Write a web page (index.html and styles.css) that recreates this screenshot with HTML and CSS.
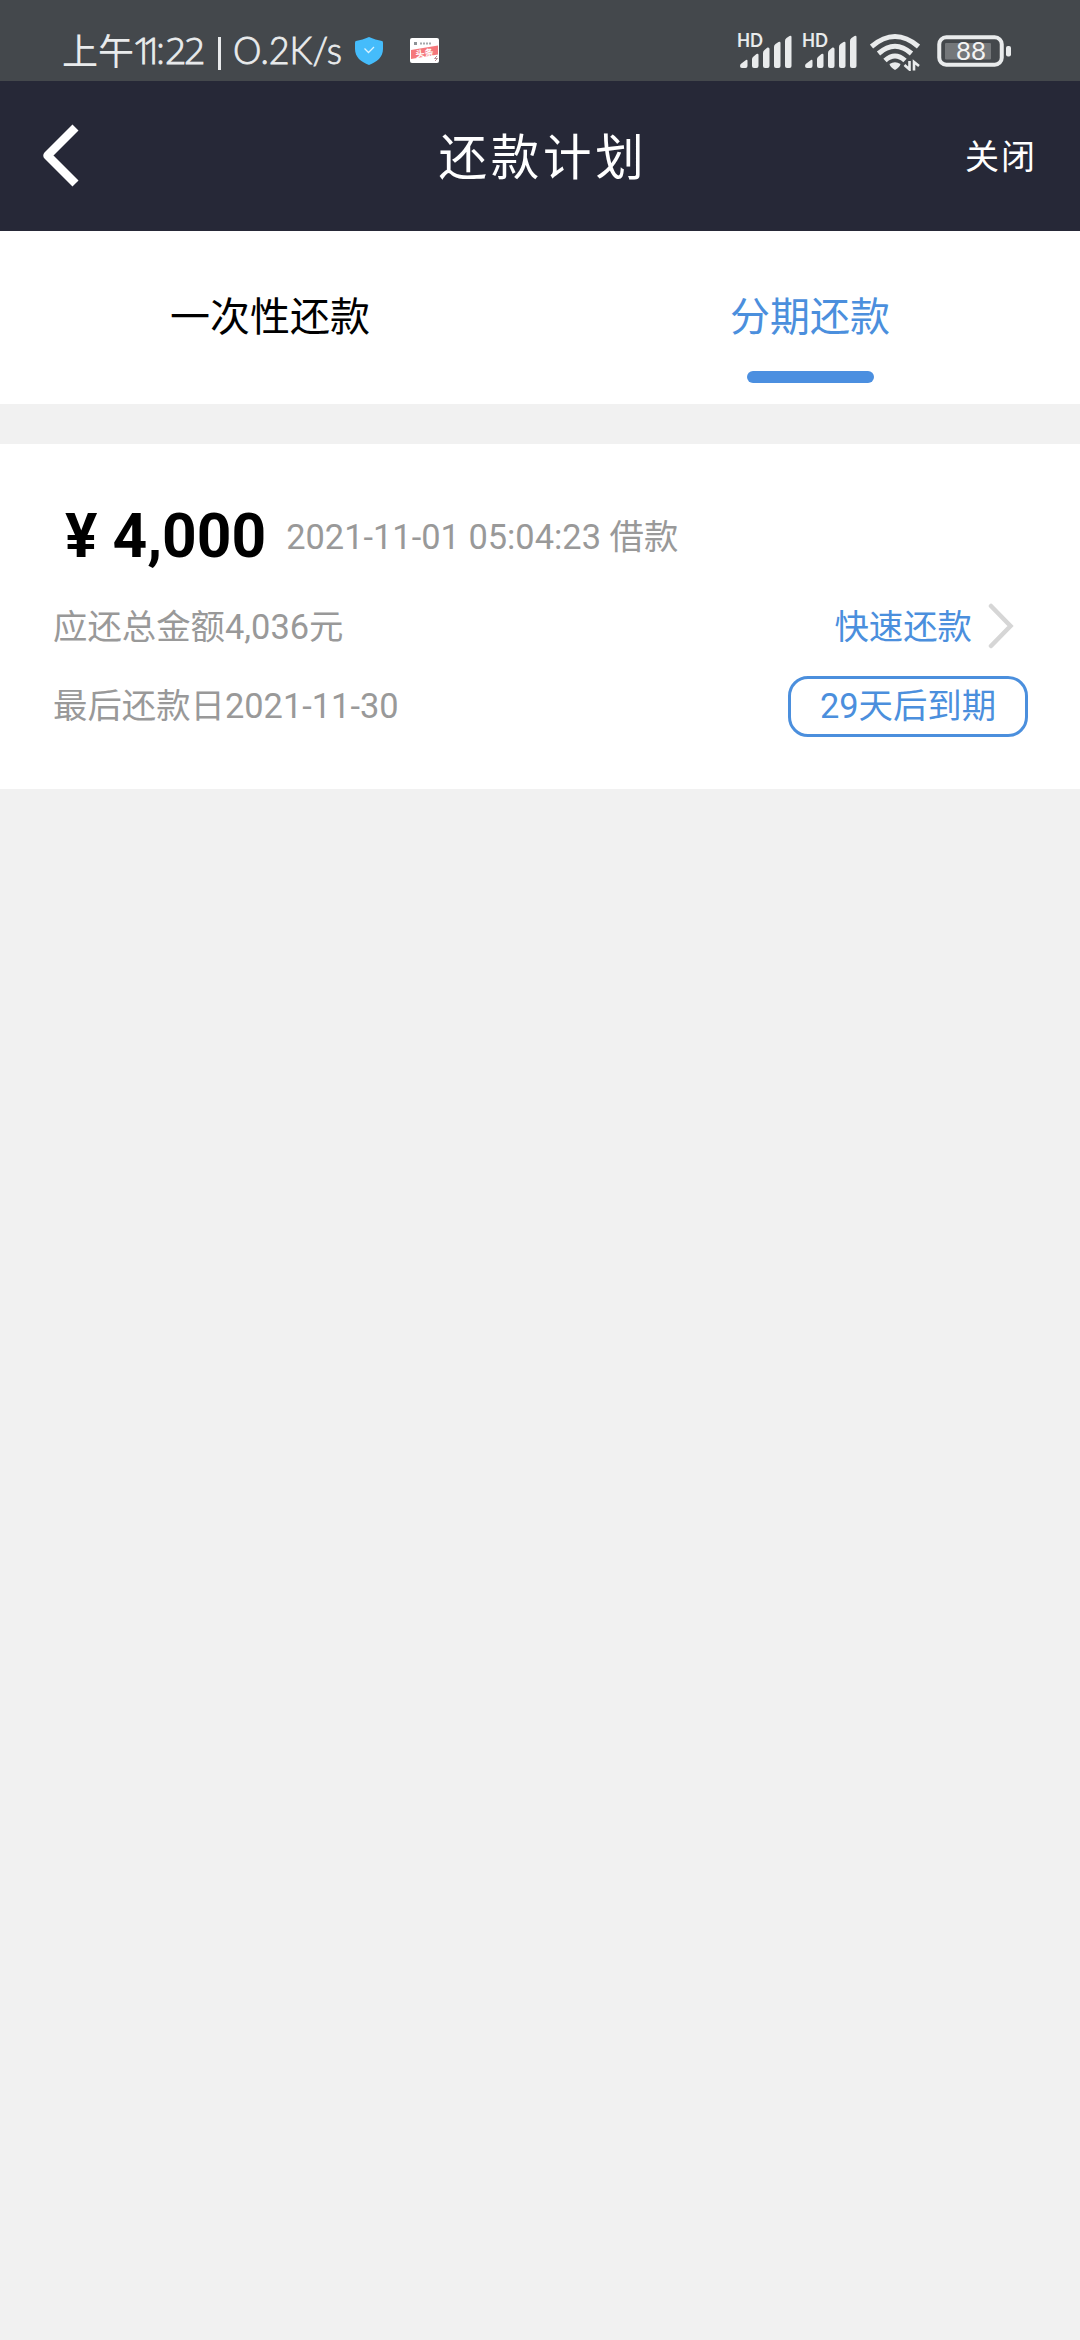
FILE: index.html
```html
<!DOCTYPE html>
<html lang="zh-CN">
<head>
<meta charset="utf-8">
<title>还款计划</title>
<link rel="stylesheet" href="styles.css">
</head>
<body>
<div class="status">
  <div class="status-left">
    <svg class="clock" width="283" height="60" viewBox="0 0 283 60"><text class="cjk" x="0" y="44" textLength="72">上午</text><text class="digits" x="70 80 94 103 122" y="43">11:22</text><path d="M157.500 16V49" stroke="#e9ebec" stroke-width="3"/><text class="latin" x="171" y="43" textLength="109" lengthAdjust="spacingAndGlyphs">O.2K/s</text></svg>
    <svg class="shield" width="28" height="28" viewBox="0 0 28 28"><path d="M14 0C10 2 5 3 1 4Q0 4 0 6V12C0 20 6 25 14 28C22 25 28 20 28 12V6Q28 4 27 4C23 3 18 2 14 0Z" fill="#45bcfb"/><path d="M9.500 11.500L13.500 15.500L19 10" fill="none" stroke="#d8f3ff" stroke-width="1.300"/></svg>
    <svg class="news" width="29" height="25" viewBox="0 0 29 25"><rect width="29" height="25" rx="2" fill="#fff"/><rect x="4" y="4" width="3" height="3" fill="#8d9296"/><path d="M10 5.500H22" stroke="#a5a9ac" stroke-width="2" stroke-dasharray="2 1"/><path d="M1 12L28 7.500V16.500L1 21Z" fill="#f5777b"/><text class="news-text" x="5.500" y="18.500" transform="rotate(-8 14 15)">头条</text><path d="M27 18L24.500 20.500H27.500L25 23" fill="none" stroke="#b98d92" stroke-width="1"/></svg>
  </div>
  <div class="status-right">
    <svg class="signal" width="55" height="43" viewBox="0 -7 55 43"><text class="hd" x="0" y="13.500" textLength="26" lengthAdjust="spacingAndGlyphs">HD</text><g fill="#e9ebec"><path d="M3 33Q3 31 5 30L9 27Q10.500 26 10.500 28V33Q10.500 35 8.500 35H5Q3 35 3 33Z"/><path d="M15 26Q15 24.500 16.500 23.500L19.500 21Q21.500 20 21.500 22V33Q21.500 35 19.500 35H17Q15 35 15 33Z"/><path d="M26 20Q26 18 27.500 17L30.500 14.500Q32.500 14 32.500 16V33Q32.500 35 30.500 35H28Q26 35 26 33Z"/><path d="M37 14Q37 12 38.500 11L41.500 9Q43.500 8 43.500 10V33Q43.500 35 41.500 35H39Q37 35 37 33Z"/><path d="M48 8Q48 6 49.500 5L52.500 3Q54.500 2 54.500 4V33Q54.500 35 52.500 35H50Q48 35 48 33Z"/></g></svg>
    <svg class="signal second" width="55" height="43" viewBox="0 -7 55 43"><text class="hd" x="0" y="13.500" textLength="26" lengthAdjust="spacingAndGlyphs">HD</text><g fill="#e9ebec"><path d="M3 33Q3 31 5 30L9 27Q10.500 26 10.500 28V33Q10.500 35 8.500 35H5Q3 35 3 33Z"/><path d="M15 26Q15 24.500 16.500 23.500L19.500 21Q21.500 20 21.500 22V33Q21.500 35 19.500 35H17Q15 35 15 33Z"/><path d="M26 20Q26 18 27.500 17L30.500 14.500Q32.500 14 32.500 16V33Q32.500 35 30.500 35H28Q26 35 26 33Z"/><path d="M37 14Q37 12 38.500 11L41.500 9Q43.500 8 43.500 10V33Q43.500 35 41.500 35H39Q37 35 37 33Z"/><path d="M48 8Q48 6 49.500 5L52.500 3Q54.500 2 54.500 4V33Q54.500 35 52.500 35H50Q48 35 48 33Z"/></g></svg>
    <svg class="wifi" width="50" height="38" viewBox="0 0 50 38"><g fill="none" stroke="#e9ebec" stroke-width="5"><path d="M1.500 13.500Q25 -6.500 48.500 13.500"/><path d="M8.500 20.500Q25 6 41.500 20.500"/><path d="M15 27.500Q25 18.500 35 27.500"/></g><path d="M19.500 31Q25 27.500 30.500 31Q30 34 25 37Q20 34 19.500 31Z" fill="#e9ebec"/><path d="M39.500 28V36.500L34.500 32M44 37.500V29L49 33" fill="none" stroke="#e9ebec" stroke-width="2.600"/></svg>
    <svg class="battery" width="74" height="33" viewBox="0 0 74 33"><rect x="2.250" y="2.250" width="62.500" height="27.500" rx="7" fill="none" stroke="#e9ebec" stroke-width="4"/><rect x="8" y="8" width="46" height="16.500" rx="1" fill="#74777a"/><rect x="69" y="11" width="5" height="10.500" rx="2" fill="#e9ebec"/><text class="level" x="19" y="25" textLength="30" lengthAdjust="spacingAndGlyphs">88</text></svg>
  </div>
</div>
<header class="header">
  <svg class="back" width="38" height="64" viewBox="0 0 38 64"><path d="M33.500 3.500L5.500 31.500L33.500 59.500" fill="none" stroke="#fff" stroke-width="8.500" stroke-linejoin="round"/></svg>
  <h1 class="title">还款计划</h1>
  <span class="close">关闭</span>
</header>
<nav class="tabs">
  <div class="tab">一次性还款</div>
  <div class="tab active">分期还款</div>
</nav>
<main class="card">
  <div class="row loan"><span class="amount">¥ 4,000</span><span class="date">2021-11-01 05:04:23 借款</span></div>
  <div class="row total"><span class="label">应还总金额4,036元</span><span class="repay"><span class="label">快速还款</span><svg class="arrow" width="26" height="46" viewBox="0 0 26 46"><path d="M3 3L22.500 23L3 43" fill="none" stroke="#d6d6d6" stroke-width="4.500" stroke-linecap="round"/></svg></span></div>
  <div class="row due"><span class="label">最后还款日2021-11-30</span><span class="badge">29天后到期</span></div>
</main>
</body>
</html>
```
FILE: styles.css
```css
* { box-sizing: border-box; }
body {
  margin: 0;
  min-height: 2340px;
  background: #f1f1f1;
  font-family: Roboto, "Noto Sans CJK SC", sans-serif;
  font-size: 34.400px;
  color: #999;
}
.status {
  height: 81px;
  padding: 0 69px 0 62px;
  display: flex;
  justify-content: space-between;
  align-items: flex-start;
  background: #44484c;
  color: #e9ebec;
}
.status-left, .status-right { display: flex; }
.clock { margin-top: 21px; }
.cjk { font: 400 36px "Noto Sans CJK SC", sans-serif; fill: #e9ebec; }
.digits { font: 300 37.500px "Open Sans", sans-serif; fill: #e9ebec; stroke: #e9ebec; stroke-width: .8px; }
.latin { font: 300 37.500px Lato, sans-serif; fill: #e9ebec; stroke: #e9ebec; stroke-width: .8px; }
.shield { margin: 37px 0 0 10px; }
.news { margin: 38px 0 0 27px; }
.news-text { font: 700 9px "Noto Sans CJK SC", sans-serif; fill: #fff; }
.signal { margin-top: 26px; overflow: visible; }
.second { margin-left: 10px; }
.hd { font: 700 18px Lato, sans-serif; fill: #e9ebec; }
.wifi { margin: 33px 0 0 13px; }
.battery { margin: 35px 0 0 17px; }
.level { font: 400 25px Lato, sans-serif; fill: #f4f4f4; }
.header {
  height: 150px;
  padding: 0 43px 0 42px;
  display: grid;
  grid-template-columns: 1fr auto 1fr;
  align-items: center;
  background: #262837;
  color: #fff;
}
.title { margin: 0; padding: 5px 0 0 7px; font-size: 48.500px; line-height: 60px; font-weight: 400; letter-spacing: 3.800px; }
.close { justify-self: end; padding-top: 2px; font-size: 34px; line-height: 50px; letter-spacing: 2px; }
.tabs { height: 173px; display: flex; background: #fff; }
.tab {
  flex: 1;
  padding-top: 57px;
  display: flex;
  flex-direction: column;
  align-items: center;
  font-size: 40px;
  line-height: 60px;
  color: #000;
}
.active { color: #4b8fdd; }
.active::after {
  content: "";
  width: 127px;
  height: 12px;
  margin-top: 23px;
  border-radius: 6px;
  background: #4b8fe0;
}
.card { height: 345px; margin-top: 40px; padding: 52px 52px 0 53px; background: #fff; }
.row { display: flex; justify-content: space-between; align-items: center; white-space: nowrap; }
.loan { height: 80px; justify-content: flex-start; }
.amount { margin-left: 12px; padding-top: 1px; font-size: 60.500px; font-weight: 700; color: #000; }
.date { margin-left: 20px; padding-bottom: 5px; }
.total { height: 100px; }
.total .label { padding-bottom: 4px; }
.repay { display: flex; align-items: center; padding-right: 14px; color: #4b8fdd; }
.arrow { margin-left: 16px; }
.due { height: 60px; }
.due .label { padding-bottom: 6px; }
.badge {
  width: 240px;
  height: 61px;
  border: 3px solid #4b8fdd;
  border-radius: 20px;
  text-align: center;
  line-height: 54px;
  color: #4b8fdd;
}
```
